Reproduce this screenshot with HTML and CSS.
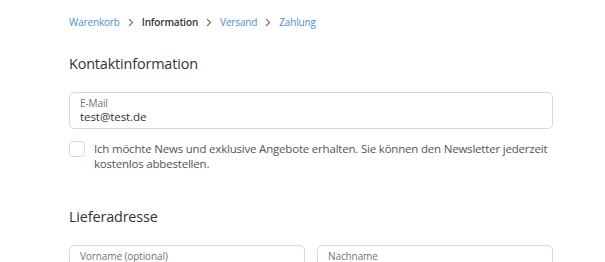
FILE: index.html
```html
<!DOCTYPE html>
<html>
<head>
    <title>Checkout - Information</title>
    <link rel="stylesheet" href="styles.css">
</head>
<body>
<div class="main">
    <nav class="breadcrumb">
        <a href="#">Warenkorb</a>
        <span class="chevron"><svg width="6" height="9" viewBox="0 0 6 9"><path d="M1 1 L4.5 4.5 L1 8" fill="none" stroke="#777" stroke-width="1.2"/></svg></span>
        <span class="current">Information</span>
        <span class="chevron"><svg width="6" height="9" viewBox="0 0 6 9"><path d="M1 1 L4.5 4.5 L1 8" fill="none" stroke="#777" stroke-width="1.2"/></svg></span>
        <a href="#">Versand</a>
        <span class="chevron"><svg width="6" height="9" viewBox="0 0 6 9"><path d="M1 1 L4.5 4.5 L1 8" fill="none" stroke="#777" stroke-width="1.2"/></svg></span>
        <a href="#">Zahlung</a>
    </nav>

    <section class="section">
        <h2>Kontaktinformation</h2>
        <div class="field">
            <label for="email">E-Mail</label>
            <input type="email" id="email" value="test@test.de">
        </div>
        <label class="checkbox-row">
            <span class="checkbox"></span>
            <span>Ich möchte News und exklusive Angebote erhalten. Sie können den Newsletter jederzeit kostenlos abbestellen.</span>
        </label>
    </section>

    <section class="section shipping">
        <h2>Lieferadresse</h2>
        <div class="field-row">
            <div class="field">
                <label for="firstName">Vorname (optional)</label>
                <input type="text" id="firstName">
            </div>
            <div class="field">
                <label for="lastName">Nachname</label>
                <input type="text" id="lastName">
            </div>
        </div>
    </section>
</div>
</body>
</html>
```

FILE: styles.css
```css
body {
    font-family: "Open Sans", "Noto Sans", sans-serif;
    background: #fff;
    color: #333;
    margin: 0;
}

.main {
    width: 484px;
    padding: 15px 0 0 69px;
}

.breadcrumb {
    display: flex;
    align-items: center;
    gap: 8px;
    font-size: 10px;
    letter-spacing: -0.15px;
    line-height: 14px;
}

.breadcrumb a {
    color: #4b8fcb;
    text-decoration: none;
}

.breadcrumb .current {
    font-weight: 600;
    color: #333;
}

.chevron {
    display: flex;
    align-items: center;
}

.section {
    margin-top: 25px;
}

.section.shipping {
    margin-top: 36px;
}

.section h2 {
    font-size: 14.4px;
    font-weight: 400;
    letter-spacing: -0.15px;
    margin: 0;
    line-height: 20px;
    color: #333;
}

.field {
    border: 1px solid #d9d9d9;
    border-radius: 5px;
    padding: 4px 10px 0;
    height: 37px;
    box-sizing: border-box;
    margin-top: 18px;
    flex: 1;
    min-width: 0;
}

.field-row {
    display: flex;
    gap: 12px;
}

.field label {
    display: block;
    font-size: 10px;
    letter-spacing: -0.1px;
    line-height: 12px;
    color: #737373;
}

.field input {
    display: block;
    border: none;
    outline: none;
    padding: 0;
    margin: 0;
    font-family: inherit;
    font-size: 11.6px;
    letter-spacing: -0.1px;
    line-height: 16px;
    height: 16px;
    color: #333;
    width: 100%;
}

.checkbox-row {
    display: flex;
    gap: 9px;
    margin-top: 12px;
    font-size: 11.5px;
    letter-spacing: -0.2px;
    line-height: 15px;
    color: #545454;
}

.checkbox {
    flex: none;
    width: 16px;
    height: 16px;
    box-sizing: border-box;
    border: 1px solid #d9d9d9;
    border-radius: 4px;
}
```
